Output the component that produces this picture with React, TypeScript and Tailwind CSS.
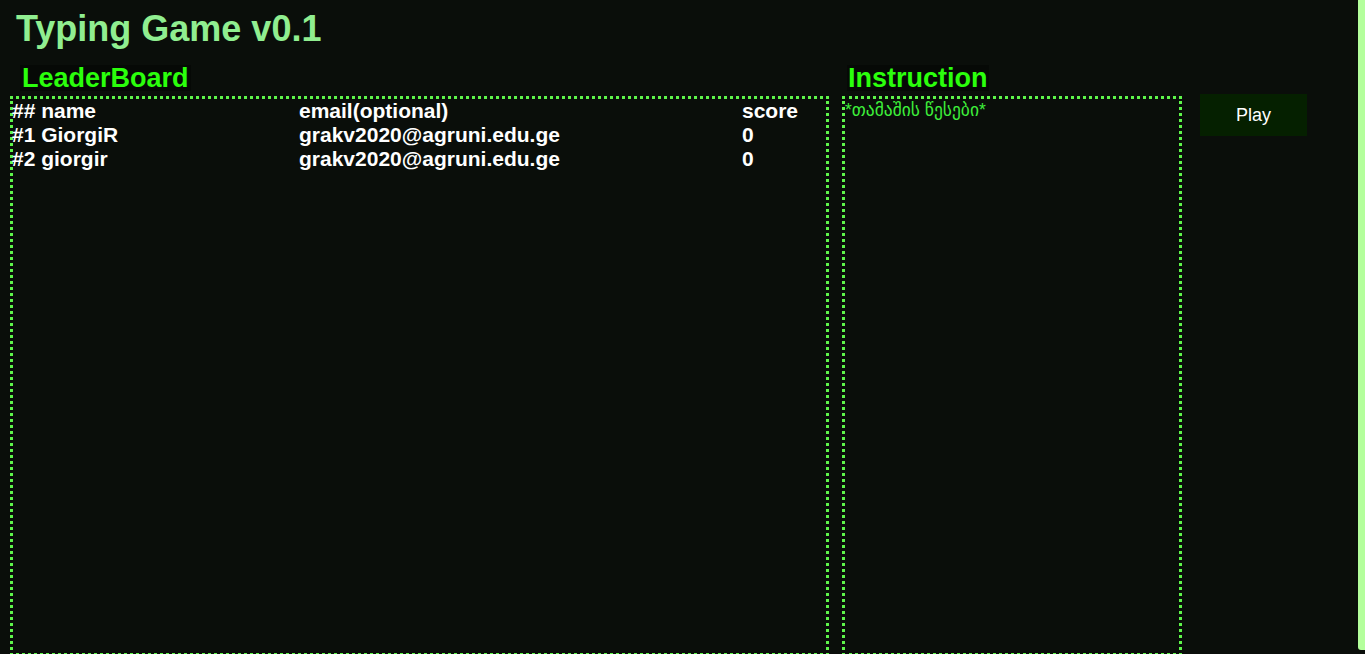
import React from 'react';

interface Player {
    rank: string;
    name: string;
    email: string;
    score: string;
}

const players: Player[] = [
    { rank: '#1', name: 'GiorgiR', email: 'grakv2020@agruni.edu.ge', score: '0' },
    { rank: '#2', name: 'giorgir', email: 'grakv2020@agruni.edu.ge', score: '0' },
];

const Row = ({ a, b, c }: { a: string; b: string; c: string }) => (
    <div className="-ml-px flex h-6 items-center text-[21px] font-bold text-white leading-6">
        <span className="w-[287px]">{a}</span>
        <span className="w-[443px]">{b}</span>
        <span>{c}</span>
    </div>
);

export default function App() {
    return (
        <div className="relative h-screen overflow-hidden bg-[#0a0e0a] font-['Liberation_Sans',Arial,sans-serif]">
            <h1 className="pl-4 pt-[8px] text-[36px] font-bold leading-[41px] text-[#90ee90]">Typing Game v0.1</h1>

            <div className="mt-[15px] flex items-start">
                {/* leaderboard */}
                <div className="ml-[10px] w-[819px]">
                    <h2 className="ml-[10px] mt-px block w-fit bg-[#060906] px-[2px] text-[27px] font-bold leading-[26px] text-[#2bff0c]">LeaderBoard</h2>
                    <div className="mt-[5px] h-[560px] border-[3px] border-dotted border-[#5ef54a]">
                        <Row a="## name" b="email(optional)" c="score" />
                        {players.map((p) => (
                            <Row key={p.rank} a={`${p.rank} ${p.name}`} b={p.email} c={p.score} />
                        ))}
                    </div>
                </div>

                {/* instruction */}
                <div className="ml-[13px] w-[340px]">
                    <h2 className="ml-[5px] mt-px block w-fit bg-[#060906] px-[1px] text-[27px] font-bold leading-[26px] text-[#2bff0c]">Instruction</h2>
                    <div className="mt-[5px] h-[560px] border-[3px] border-dotted border-[#5ef54a]">
                        <p className="text-[17.5px] leading-[22px] text-[#3ef03a] font-['Liberation_Sans','DejaVu_Sans',sans-serif]">*თამაშის წესები*</p>
                    </div>
                </div>

                <button className="ml-[18px] mt-[30px] h-[42px] w-[107px] bg-[#052000] text-lg text-white">Play</button>
            </div>

            {/* scrollbar thumb */}
            <div className="absolute right-0 top-0 h-[650px] w-[7px] rounded-bl-[3px] bg-[#b4ff9c]" />
        </div>
    );
}
